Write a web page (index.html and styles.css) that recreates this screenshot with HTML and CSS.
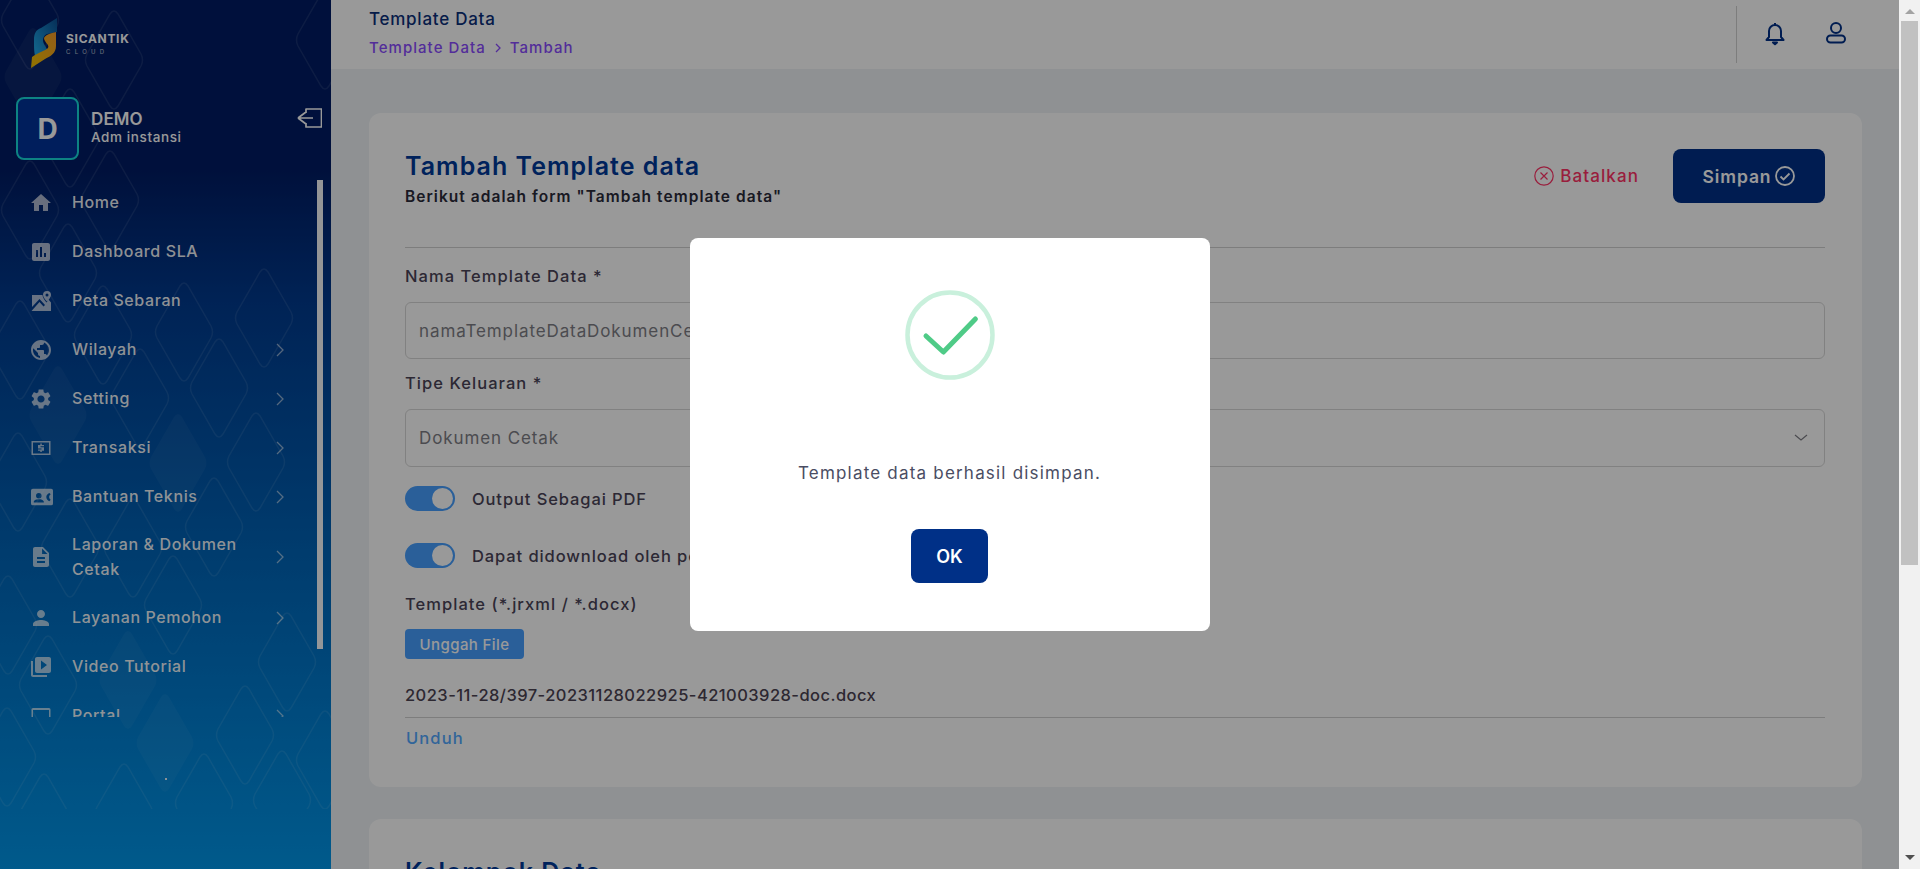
FILE: index.html
```html
<!DOCTYPE html>
<html lang="id">
<head>
<meta charset="utf-8">
<title>Template Data</title>
<link rel="stylesheet" href="styles.css">
</head>
<body>
<div class="viewport">
  <div class="app">
    <aside class="sidebar">
      <svg class="pattern" width="331" height="809" viewBox="0 0 331 809" aria-hidden="true">
        <defs>
          <path id="d" d="M-4 -46Q0 -52 4 -46L27 -6Q30 0 27 6L4 46Q0 52 -4 46L-27 6Q-30 0 -27 -6Z"/>
        </defs>
        <g class="pattern-fill">
          <use href="#d" x="33" y="77"/><use href="#d" x="58" y="415"/><use href="#d" x="178" y="463"/>
          <use href="#d" x="128" y="680"/><use href="#d" x="165" y="743"/>
        </g>
        <g class="pattern-line">
          <use href="#d" x="114" y="60"/><use href="#d" x="70" y="138"/><use href="#d" x="110" y="200"/>
          <use href="#d" x="30" y="210"/><use href="#d" x="68" y="273"/><use href="#d" x="264" y="318"/>
          <use href="#d" x="184" y="332"/><use href="#d" x="103" y="335"/><use href="#d" x="20" y="350"/>
          <use href="#d" x="219" y="388"/><use href="#d" x="140" y="398"/><use href="#d" x="256" y="462"/>
          <use href="#d" x="18" y="482"/><use href="#d" x="214" y="527"/><use href="#d" x="133" y="548"/>
          <use href="#d" x="70" y="548"/><use href="#d" x="173" y="605"/><use href="#d" x="8" y="625"/>
          <use href="#d" x="287" y="662"/><use href="#d" x="48" y="685"/><use href="#d" x="245" y="735"/>
          <use href="#d" x="7" y="757"/><use href="#d" x="282" y="800"/><use href="#d" x="204" y="803"/>
          <use href="#d" x="124" y="813"/><use href="#d" x="44" y="823"/><use href="#d" x="325" y="760"/>
          <use href="#d" x="30" y="20"/><use href="#d" x="325" y="40"/>
        </g>
      </svg>

      <div class="brand">
        <svg class="brand-mark" width="26" height="50" viewBox="0 0 26 50" aria-hidden="true">
          <defs>
            <linearGradient id="lb" x1="1" y1="0" x2="0" y2="1"><stop offset="0" stop-color="#0a4f93"/><stop offset="1" stop-color="#22b0f0"/></linearGradient>
            <linearGradient id="lg" x1="1" y1="0" x2="0" y2="1"><stop offset="0" stop-color="#f59a2a"/><stop offset="1" stop-color="#f2c200"/></linearGradient>
          </defs>
          <path fill="url(#lb)" d="M26 0V14L16 16C12 18 11 22 13 26L17 33L5 40C3 36 3 30 3 22C3 15 5 12 10 10Z"/>
          <path fill="url(#lg)" d="M25 14V28C25 35 20 38 14 41L0 50L1 39C8 34 14 33 17 30C19 27 13 24 13 20C14 17 20 15 25 14Z"/>
        </svg>
        <div class="brand-text">
          <span class="brand-name">SICANTIK</span>
          <span class="brand-sub">CLOUD</span>
        </div>
      </div>

      <div class="account">
        <div class="avatar">D</div>
        <div class="account-text">
          <span class="account-name">DEMO</span>
          <span class="account-role">Adm instansi</span>
        </div>
        <svg class="logout" width="26" height="20" viewBox="0 0 26 20" aria-hidden="true">
          <path d="M10 5V1H25.500V19H10V15M17 10H2M2 10L10 4M2 10L10 16"/>
        </svg>
      </div>

      <div class="nav-wrap">
        <nav class="nav">
          <a class="nav-item"><svg class="nav-icon" viewBox="0 0 24 24"><path d="M10 20v-6h4v6h5v-8h3L12 3 2 12h3v8z"/></svg><span class="nav-label">Home</span></a>
          <a class="nav-item"><svg class="nav-icon" viewBox="0 0 24 24"><path d="M19 3H5c-1.100 0-2 .9-2 2v14c0 1.100.9 2 2 2h14c1.100 0 2-.9 2-2V5c0-1.100-.9-2-2-2zM9 17H7v-7h2v7zm4 0h-2V7h2v10zm4 0h-2v-4h2v4z"/></svg><span class="nav-label">Dashboard SLA</span></a>
          <a class="nav-item"><svg class="nav-icon" viewBox="0 0 24 24"><path d="M3 6h10.500c.2 2.300 1.600 4.700 4 7.500.8-.9 1.600-1.800 2.200-2.700L22 13.500V22H2.500l8-9 4 4.500 1.500-1.500-5.500-6L3 18zM18 2a4 4 0 0 1 4 4c0 2-2 4.500-4 6.500-2-2-4-4.500-4-6.500a4 4 0 0 1 4-4zm0 2.500a1.500 1.500 0 1 0 0 3 1.500 1.500 0 0 0 0-3z"/></svg><span class="nav-label">Peta Sebaran</span></a>
          <a class="nav-item"><svg class="nav-icon" viewBox="0 0 24 24"><path d="M12 2C6.480 2 2 6.480 2 12s4.480 10 10 10 10-4.480 10-10S17.520 2 12 2zm-1 17.930c-3.950-.49-7-3.850-7-7.930 0-.62.08-1.210.21-1.790L9 15v1c0 1.100.9 2 2 2v1.930zm6.900-2.540c-.26-.81-1-1.390-1.900-1.390h-1v-3c0-.55-.45-1-1-1H8v-2h2c.55 0 1-.45 1-1V7h2c1.100 0 2-.9 2-2v-.41c2.930 1.190 5 4.060 5 7.410 0 2.080-.8 3.970-2.100 5.390z"/></svg><span class="nav-label">Wilayah</span><svg class="nav-chevron" viewBox="0 0 8 14"><path d="M1 1l6 6-6 6"/></svg></a>
          <a class="nav-item"><svg class="nav-icon" viewBox="0 0 24 24"><path d="M19.140 12.940c.04-.3.06-.61.06-.94 0-.32-.02-.64-.07-.94l2.030-1.580c.18-.14.23-.41.12-.61l-1.920-3.320c-.12-.22-.37-.29-.59-.22l-2.390.96c-.5-.38-1.030-.7-1.620-.94l-.36-2.540c-.04-.24-.24-.41-.48-.41h-3.840c-.24 0-.43.17-.47.41l-.36 2.540c-.59.24-1.130.57-1.620.94l-2.390-.96c-.22-.08-.47 0-.59.22L2.740 8.870c-.12.21-.08.47.12.61l2.030 1.580c-.05.3-.09.63-.09.94s.02.64.07.94l-2.030 1.580c-.18.14-.23.41-.12.61l1.920 3.320c.12.22.37.29.59.22l2.390-.96c.5.38 1.030.7 1.620.94l.36 2.540c.05.24.24.41.48.41h3.840c.24 0 .44-.17.47-.41l.36-2.540c.59-.24 1.130-.56 1.620-.94l2.390.96c.22.08.47 0 .59-.22l1.920-3.320c.12-.22.07-.47-.12-.61l-2.010-1.580zM12 15.600c-1.980 0-3.600-1.620-3.600-3.600s1.620-3.600 3.600-3.600 3.600 1.620 3.600 3.600-1.620 3.600-3.600 3.600z"/></svg><span class="nav-label">Setting</span><svg class="nav-chevron" viewBox="0 0 8 14"><path d="M1 1l6 6-6 6"/></svg></a>
          <a class="nav-item"><svg class="nav-icon" viewBox="0 0 24 24"><path fill-rule="evenodd" d="M2.500 5h19v14h-19zM4 6.500v11h16v-11zM11.300 7.500h1.500V9H15v1.300h-3.500v1h3.500v3.400h-2.200v1.300h-1.500v-1.300H9v-1.300h3.500v-1H9V9h2.300z"/></svg><span class="nav-label">Transaksi</span><svg class="nav-chevron" viewBox="0 0 8 14"><path d="M1 1l6 6-6 6"/></svg></a>
          <a class="nav-item"><svg class="nav-icon nav-icon-wide" viewBox="0 0 24 20"><path fill-rule="evenodd" d="M2 1h20a2 2 0 0 1 2 2v14a2 2 0 0 1-2 2H2a2 2 0 0 1-2-2V3a2 2 0 0 1 2-2zM8.500 5.500a3 3 0 1 0 0 6 3 3 0 0 0 0-6zM3 16v-.8c0-1.800 3.500-2.700 5.500-2.700s5.500.9 5.500 2.700v.8zM20 5.500c-2 .8-3.300 2.500-3.300 4.500s1.300 3.700 3.300 4.500l1.500-1.500c-1-.5-1.500-1.700-1.800-3 .3-1.300.8-2.500 1.800-3z"/></svg><span class="nav-label">Bantuan Teknis</span><svg class="nav-chevron" viewBox="0 0 8 14"><path d="M1 1l6 6-6 6"/></svg></a>
          <a class="nav-item nav-item-tall"><svg class="nav-icon" viewBox="0 0 24 24"><path d="M14 2H6c-1.100 0-1.990.9-1.990 2L4 20c0 1.100.89 2 1.990 2H18c1.100 0 2-.9 2-2V8l-6-6zm2 16H8v-2h8v2zm0-4H8v-2h8v2zm-3-5V3.500L18.500 9H13z"/></svg><span class="nav-label">Laporan &amp; Dokumen Cetak</span><svg class="nav-chevron" viewBox="0 0 8 14"><path d="M1 1l6 6-6 6"/></svg></a>
          <a class="nav-item"><svg class="nav-icon" viewBox="0 0 24 24"><path d="M12 12c2.210 0 4-1.790 4-4s-1.790-4-4-4-4 1.790-4 4 1.790 4 4 4zm0 2c-2.670 0-8 1.340-8 4v2h16v-2c0-2.660-5.330-4-8-4z"/></svg><span class="nav-label">Layanan Pemohon</span><svg class="nav-chevron" viewBox="0 0 8 14"><path d="M1 1l6 6-6 6"/></svg></a>
          <a class="nav-item"><svg class="nav-icon" viewBox="0 0 24 24"><path d="M4 6H2v14c0 1.100.9 2 2 2h14v-2H4V6zm16-4H8c-1.100 0-2 .9-2 2v12c0 1.100.9 2 2 2h12c1.100 0 2-.9 2-2V4c0-1.100-.9-2-2-2zm-8 12.500v-9l6 4.500-6 4.500z"/></svg><span class="nav-label">Video Tutorial</span></a>
          <a class="nav-item"><svg class="nav-icon" viewBox="0 0 24 24"><path fill-rule="evenodd" d="M4 4h16a1.500 1.500 0 0 1 1.500 1.500V19h-19V5.500A1.500 1.500 0 0 1 4 4zm0 2v8.500h16V6z"/></svg><span class="nav-label">Portal</span><svg class="nav-chevron" viewBox="0 0 8 14"><path d="M1 1l6 6-6 6"/></svg></a>
        </nav>
        <div class="nav-thumb"></div>
      </div>
      <div class="sidebar-foot"><span class="dot"></span></div>
    </aside>

    <div class="main">
      <header class="topbar">
        <div class="crumbs">
          <div class="page-title">Template Data</div>
          <div class="breadcrumb"><span>Template Data</span><svg class="crumb-sep" width="6" height="10" viewBox="0 0 6 10"><path d="M1 1l4 4-4 4"/></svg><span>Tambah</span></div>
        </div>
        <div class="top-actions">
          <svg class="top-icon" width="24" height="26" viewBox="0 0 24 26"><path d="M12 3v2M6 11a6 6 0 0 1 12 0v6l2.500 3H3.500L6 17zM10 22.500h4l-2 1.800z"/></svg>
          <svg class="top-icon" width="24" height="26" viewBox="0 0 24 26"><circle cx="12" cy="8" r="5"/><rect x="3" y="15.500" width="18" height="7" rx="3.500"/></svg>
        </div>
      </header>

      <div class="content">
        <section class="card">
          <div class="card-head">
            <div>
              <h1 class="card-title">Tambah Template data</h1>
              <p class="card-sub">Berikut adalah form "Tambah template data"</p>
            </div>
            <div class="card-actions">
              <button class="btn-cancel"><svg width="20" height="20" viewBox="0 0 20 20"><circle cx="10" cy="10" r="9.200"/><path d="M6.500 6.500l7 7M13.500 6.500l-7 7"/></svg>Batalkan</button>
              <button class="btn-save">Simpan<svg width="20" height="20" viewBox="0 0 20 20"><circle cx="10" cy="10" r="9"/><path d="M5.500 10.500l3 3 6-6"/></svg></button>
            </div>
          </div>

          <label class="field-label first">Nama Template Data *</label>
          <div class="input">namaTemplateDataDokumenCetak</div>
          <label class="field-label">Tipe Keluaran *</label>
          <div class="input select">Dokumen Cetak<svg width="14" height="8" viewBox="0 0 14 8"><path d="M1 1l6 5 6-5"/></svg></div>

          <div class="switch-row"><span class="switch"><span class="knob"></span></span><span class="switch-label">Output Sebagai PDF</span></div>
          <div class="switch-row"><span class="switch"><span class="knob"></span></span><span class="switch-label">Dapat didownload oleh pemohon</span></div>

          <div class="template-label">Template (*.jrxml / *.docx)</div>
          <button class="btn-upload">Unggah File</button>
          <div class="file-name">2023-11-28/397-20231128022925-421003928-doc.docx</div>
          <a class="download">Unduh</a>
        </section>

        <section class="card card-next">
          <h2 class="card-title">Kelompok Data</h2>
        </section>
      </div>
    </div>

    <div class="overlay">
      <div class="modal">
        <svg class="modal-check" width="90" height="90" viewBox="0 0 90 90">
          <circle class="ring" cx="45" cy="45" r="42.500"/>
          <path class="tick" d="M21 46L38.400 62L70.400 29"/>
        </svg>
        <p class="modal-text">Template data berhasil disimpan.</p>
        <button class="btn-ok">OK</button>
      </div>
    </div>
  </div>

  <div class="scrollbar">
    <span class="arrow arrow-up"></span>
    <span class="thumb"></span>
    <span class="arrow arrow-down"></span>
  </div>
</div>
</body>
</html>
```
FILE: styles.css
```css
* { box-sizing: border-box; }
html, body { margin: 0; height: 100%; overflow: hidden; }
body { font-family: Inter, "Open Sans", "Liberation Sans", sans-serif; color: #4a4458; }
button { font-family: inherit; border: 0; cursor: pointer; }
h1, h2, p { margin: 0; }

.viewport { display: flex; height: 869px; }
.app { position: relative; flex: 1; min-width: 0; display: flex; overflow: hidden; }

/* scrollbar */
.scrollbar { width: 21px; flex: none; background: #f1f1f1; display: flex; flex-direction: column; align-items: center; }
.thumb { width: 17px; height: 544px; background: #c1c1c1; }
.arrow { display: block; width: 0; height: 0; border-left: 5px solid transparent; border-right: 5px solid transparent; }
.arrow-up { border-bottom: 5px solid #a3a3a3; margin: 9px 0 7px; }
.arrow-down { border-top: 5px solid #505050; margin-top: 290px; }

/* sidebar */
.sidebar { position: relative; width: 331px; flex: none; display: flex; flex-direction: column; color: #fff;
  background: linear-gradient(180deg, #001c64 0, #001c64 170px, #003a8e 300px, #0064b7 550px, #0096e9 869px); overflow: hidden; }
.pattern { position: absolute; left: 0; top: 0; }
.pattern-line { fill: none; stroke: rgba(255,255,255,.09); stroke-width: 1.500; }
.pattern-fill { fill: rgba(255,255,255,.045); }

.brand { position: relative; display: flex; align-items: flex-start; gap: 9px; height: 97px; padding: 18px 0 0 31px; }
.brand-text { display: flex; flex-direction: column; margin-top: 14px; }
.brand-name { font-size: 12px; font-weight: 700; line-height: 14px; letter-spacing: .7px; }
.brand-sub { font-size: 6px; line-height: 8px; letter-spacing: 4.300px; margin-top: 2px; opacity: .7; }

.account { position: relative; display: flex; align-items: flex-start; padding-left: 16px; height: 81px; }
.avatar { width: 63px; height: 63px; flex: none; border: 2px solid #17dada; border-radius: 8px; background: #00329a;
  display: flex; align-items: center; justify-content: center; font-size: 28px; font-weight: 700; }
.account-text { display: flex; flex-direction: column; margin: 12px 0 0 12px; flex: 1; }
.account-name { font-size: 17px; font-weight: 600; line-height: 20px; letter-spacing: .1px; }
.account-role { font-size: 13.500px; font-weight: 500; line-height: 17px; letter-spacing: .6px; }
.logout { flex: none; margin: 11px 9px 0 0; fill: none; stroke: #fff; stroke-width: 1.700; stroke-linejoin: round; }

.nav-wrap { position: relative; height: 539px; overflow: hidden; }
.nav { width: 317px; display: flex; flex-direction: column; }
.nav-item { display: flex; align-items: center; padding: 12px 0 12px 29px; color: rgba(255,255,255,.95); }
.nav-item-tall { padding: 11px 0 11px 29px; }
.nav-icon { width: 24px; height: 24px; flex: none; fill: rgba(255,255,255,.68); margin-right: 19px; }
.nav-icon-wide { width: 22px; height: 24px; margin: 0 19px 0 2px; }
.nav-label { flex: 1; font-size: 16px; font-weight: 500; line-height: 25px; letter-spacing: .6px; padding-right: 20px; }
.nav-chevron { width: 8px; height: 14px; flex: none; margin-right: 33px; fill: none; stroke: rgba(255,255,255,.55); stroke-width: 1.300; }
.nav-thumb { position: absolute; left: 317px; top: 2px; width: 6px; height: 469px; background: rgba(255,255,255,.97); }
.sidebar-foot { position: relative; flex: 1; }
.dot { position: absolute; left: 165px; top: 61px; width: 2px; height: 2px; background: #fff; opacity: .9; }

/* main */
.main { flex: 1; min-width: 0; background: #eef2f5; }
.topbar { height: 69px; background: #fff; display: flex; justify-content: space-between; padding-left: 38px; }
.crumbs { display: flex; flex-direction: column; padding-top: 7px; }
.page-title { font-size: 17px; line-height: 24px; font-weight: 500; color: #0b2f7a; letter-spacing: .75px; }
.breadcrumb { display: flex; align-items: center; gap: 9px; margin-top: 5px; font-size: 15px; line-height: 23px; font-weight: 500; color: #8a4bff; letter-spacing: 1.050px; }
.crumb-sep { fill: none; stroke: #8a4bff; stroke-width: 1.300; }
.top-actions { display: flex; align-items: center; gap: 37px; height: 57px; margin: 6px 51px 0 0; border-left: 1px solid #d0d0d0; padding: 0 0 4px 26px; }
.top-icon { fill: none; stroke: #003087; stroke-width: 2; stroke-linejoin: round; }

.content { padding: 44px 37px 0 38px; }
.card { background: #fff; border-radius: 12px; padding: 36px 37px 37px 36px; }
.card-next { margin-top: 32px; height: 200px; }
.card-head { display: flex; justify-content: space-between; height: 99px; border-bottom: 1px solid #d0d0d0; }
.card-title { font-size: 25px; font-weight: 600; line-height: 34px; color: #003a9a; letter-spacing: 1.030px; }
.card-sub { margin-top: 3px; font-size: 15.500px; font-weight: 600; line-height: 22px; color: #2a2a3a; letter-spacing: 1.050px; }
.card-actions { display: flex; align-items: flex-start; gap: 34px; }
.btn-cancel { height: 54px; display: flex; align-items: center; gap: 6px; background: none; color: #ff3366; font-size: 17px; font-weight: 500; letter-spacing: 1.100px; padding: 0; }
.btn-cancel svg { fill: none; stroke: #ff3366; stroke-width: 1.200; }
.btn-save { width: 152px; height: 54px; display: flex; align-items: center; justify-content: center; gap: 4px; border-radius: 8px; background: #003087; color: #fff; font-size: 17.500px; font-weight: 600; letter-spacing: .9px; }
.btn-save svg { fill: none; stroke: #fff; stroke-width: 1.800; }

.field-label { display: block; margin-top: 12px; font-size: 16.500px; font-weight: 450; line-height: 24px; letter-spacing: 1.050px; }
.field-label.first { margin-top: 16px; }
.input { margin-top: 14px; height: 57px; display: flex; align-items: center; justify-content: space-between; padding: 0 13px; border: 1.500px solid #d8d8d8; border-radius: 6px; font-size: 17px; color: #7e7e85; letter-spacing: .9px; }
.select { height: 58px; padding-right: 16px; }
.select svg { fill: none; stroke: #7e7e85; stroke-width: 1.200; }

.switch-row { display: flex; align-items: center; gap: 17px; margin-top: 19px; height: 25px; }
.switch-row + .switch-row { margin-top: 32px; }
.switch { width: 50px; height: 25px; flex: none; display: flex; align-items: center; justify-content: flex-end; padding-right: 2px; border-radius: 13px; background: #469fff; }
.knob { width: 21px; height: 21px; border-radius: 50%; background: #fff; }
.switch-label { font-size: 16.500px; font-weight: 450; line-height: 24px; letter-spacing: .9px; }

.template-label { margin-top: 24px; font-size: 16.500px; font-weight: 450; line-height: 24px; letter-spacing: 1.050px; }
.btn-upload { display: block; width: 119px; height: 30px; margin-top: 13px; border-radius: 4px; background: #469fff; color: #fff; font-size: 15px; font-weight: 500; letter-spacing: .4px; padding: 0; }
.file-name { margin-top: 24px; padding-bottom: 10px; border-bottom: 1px solid #d0d0d0; font-size: 16.500px; font-weight: 450; line-height: 24px; color: #4b4353; letter-spacing: .45px; }
.download { display: block; margin-top: 8px; padding-left: 1px; font-size: 16.500px; font-weight: 500; line-height: 24px; color: #53a8ff; letter-spacing: 1.100px; }

/* modal */
.overlay { position: absolute; inset: 0; display: flex; align-items: center; justify-content: center; background: rgba(0,0,0,.4); }
.modal { width: 520px; height: 393px; display: flex; flex-direction: column; align-items: center; padding-top: 52px; border-radius: 8px; background: #fff; }
.modal-check { flex: none; }
.ring { fill: none; stroke: #c9f0dc; stroke-width: 4.500; }
.tick { fill: none; stroke: #4fcb87; stroke-width: 5; stroke-linecap: round; stroke-linejoin: round; }
.modal-text { margin-top: 81px; font-size: 17px; line-height: 24px; color: #4a4d63; letter-spacing: 1.200px; }
.btn-ok { width: 77px; height: 54px; margin-top: 44px; border-radius: 8px; background: #003087; color: #fff; font-size: 18px; font-weight: 600; padding: 0; }
```
